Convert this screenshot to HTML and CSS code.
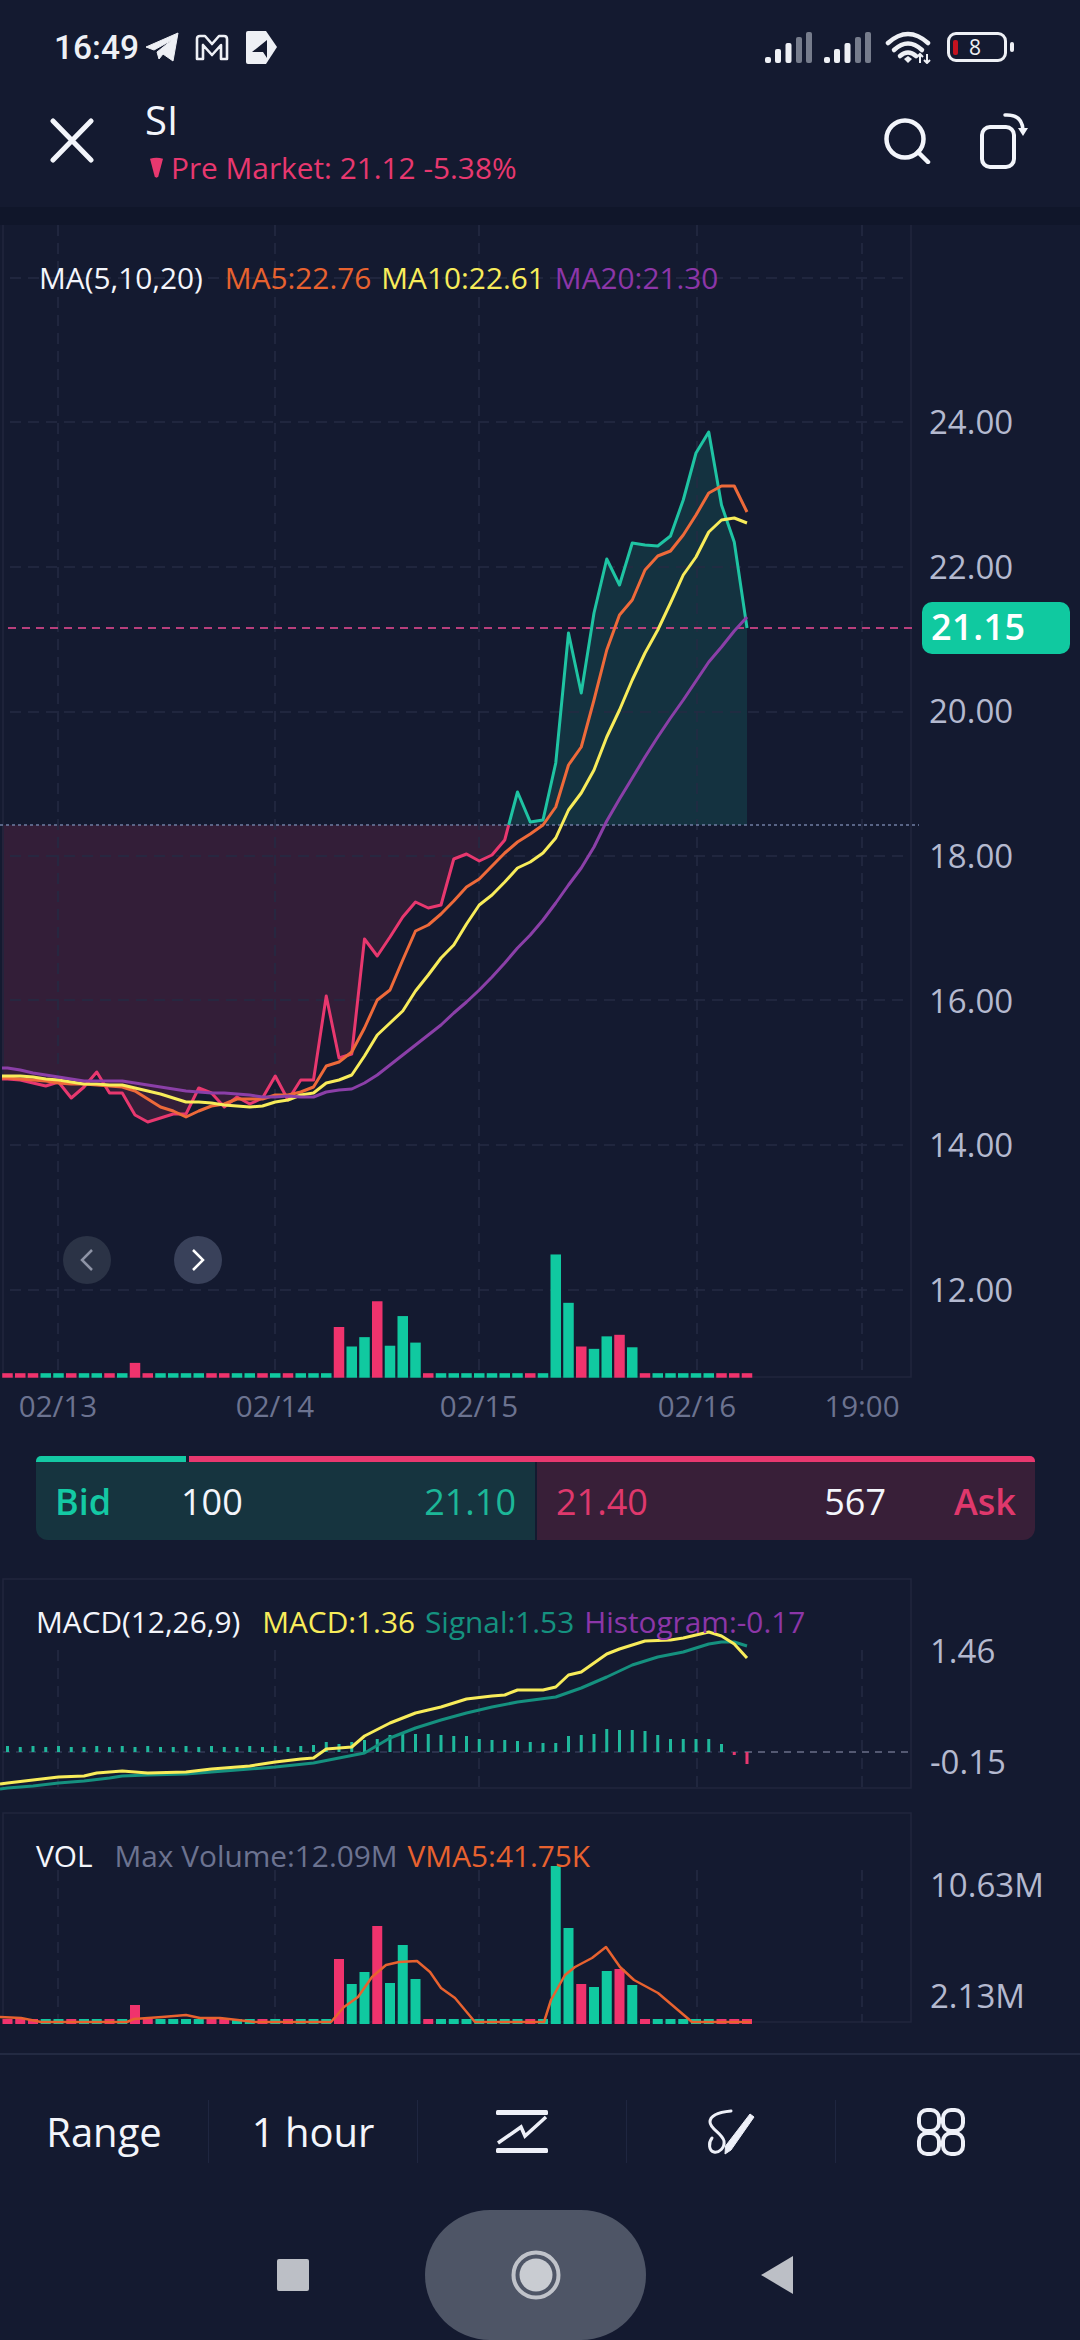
FILE: index.html
```html
<!DOCTYPE html>
<html lang="en">
<head>
    <meta charset="UTF-8">
    <meta name="viewport" content="width=device-width, initial-scale=1.0">
    <title>SI</title>
    <link rel="stylesheet" href="styles.css">
</head>
<body>
    <svg class="defs" width="0" height="0">
        <symbol id="signal" viewBox="0 0 47 31">
            <rect x="0" y="25" width="6" height="6" rx="2" fill="#eef0f5"/>
            <rect x="10" y="17" width="6" height="14" rx="2" fill="#eef0f5"/>
            <rect x="20.5" y="11" width="6" height="20" rx="2" fill="#eef0f5"/>
            <rect x="31" y="5" width="6" height="26" rx="2" fill="#767c8c"/>
            <rect x="41" y="0" width="6" height="31" rx="2" fill="#767c8c"/>
        </symbol>
    </svg>

    <!-- Status bar -->
    <div class="status">
        <span class="time">16:49</span>
        <svg class="st-plane" width="34" height="30" viewBox="0 0 34 30">
            <path d="M1 15 L33 1 L28 29 L18 22 L14 27 L12 20 L27 8 L9 18 Z" fill="#eef0f5" stroke="#eef0f5" stroke-linejoin="round"/>
        </svg>
        <svg class="st-mail" width="34" height="27" viewBox="0 0 34 27">
            <path d="M2 5 Q2 2 5 2 H10 L17 10 L24 2 H29 Q32 2 32 5 V25 H26 V11 L17 21 L8 11 V25 H2 Z" fill="none" stroke="#eef0f5" stroke-width="2.6" stroke-linejoin="round"/>
        </svg>
        <svg class="st-tag" width="32" height="33" viewBox="0 0 32 33">
            <path d="M2 0 H20 L31 16 L20 33 H2 Q0 33 0 31 V2 Q0 0 2 0 Z" fill="#eef0f5"/>
            <path d="M21 9 V27 L17 21 L6 21 Z" fill="#141a30"/>
        </svg>
        <div class="status-right">
            <svg class="st-signal" width="47" height="31"><use href="#signal"/></svg>
            <svg class="st-signal" width="47" height="31"><use href="#signal"/></svg>
            <svg class="st-wifi" width="47" height="34" viewBox="0 0 47 34">
                <g fill="none" stroke="#eef0f5" stroke-width="4.5" stroke-linecap="round">
                    <path d="M3 13 Q23 -5 43 13"/>
                    <path d="M9 20 Q23 7 37 20"/>
                    <path d="M15 26 Q23 19 31 26"/>
                </g>
                <path d="M19 29 L23 26 L27 29 L23 33 Z" fill="#eef0f5"/>
                <path d="M35 24 V33 M42 24 V33 M32 27 L35 24 L38 27 M39 30 L42 33 L45 30" fill="none" stroke="#eef0f5" stroke-width="2"/>
            </svg>
            <div class="battery">
                <span class="battery-level"></span>
                <span class="battery-num">8</span>
            </div>
            <span class="battery-cap"></span>
        </div>
    </div>

    <!-- Header -->
    <div class="topbar">
        <svg class="icon-close" width="44" height="45" viewBox="0 0 44 45">
            <path d="M3 3 L41 42 M41 3 L3 42" stroke="#f3f5fb" stroke-width="5" stroke-linecap="round"/>
        </svg>
        <div class="title">
            <div class="symbol">SI</div>
            <div class="premarket">
                <svg width="13" height="22" viewBox="0 0 14 22"><path d="M0 1 Q7 -1 14 1 L9 20 Q7 23 5 20 Z" fill="#e8386f"/></svg>
                <span>Pre Market: 21.12 -5.38%</span>
            </div>
        </div>
        <div class="topbar-right">
            <svg class="icon-search" width="48" height="46" viewBox="0 0 48 46">
                <circle cx="22" cy="21" r="18.5" fill="none" stroke="#f3f5fb" stroke-width="4.5"/>
                <path d="M35 34 L45 44" stroke="#f3f5fb" stroke-width="4.5" stroke-linecap="round"/>
            </svg>
            <svg class="icon-rotate" width="48" height="57" viewBox="0 0 48 57">
                <rect x="2" y="15" width="32" height="40" rx="8" fill="none" stroke="#f3f5fb" stroke-width="4"/>
                <path d="M25 3 Q42 2 43 18" fill="none" stroke="#f3f5fb" stroke-width="3.5" stroke-linecap="round"/>
                <path d="M38 16 L48 16 L43 24 Z" fill="#f3f5fb"/>
            </svg>
        </div>
    </div>
    <div class="band"></div>

    <!-- Main chart -->
    <div class="chart">
        <svg id="main-chart" class="plot" width="920" height="1205" viewBox="0 225 920 1205">
            <g class="xlabels">
                <text x="58" y="1405">02/13</text>
                <text x="275" y="1405">02/14</text>
                <text x="479" y="1405">02/15</text>
                <text x="697" y="1405">02/16</text>
                <text x="862" y="1405">19:00</text>
            </g>
        </svg>
        <div class="price-axis">
            <span>24.00</span>
            <span>22.00</span>
            <span>20.00</span>
            <span>18.00</span>
            <span>16.00</span>
            <span>14.00</span>
            <span>12.00</span>
        </div>
        <div class="legend legend-main">
            <span class="c-white legend-name">MA(5,10,20)</span>
            <span class="c-orange">MA5:22.76</span>
            <span class="c-yellow">MA10:22.61</span>
            <span class="c-purple">MA20:21.30</span>
        </div>
        <div class="price-tag">21.15</div>
        <button class="nav-btn nav-prev">
            <svg width="48" height="48" viewBox="0 0 48 48"><path d="M29 14 L19 24 L29 34" fill="none" stroke="#8e94a6" stroke-width="2.5"/></svg>
        </button>
        <button class="nav-btn nav-next">
            <svg width="48" height="48" viewBox="0 0 48 48"><path d="M19 14 L29 24 L19 34" fill="none" stroke="#ffffff" stroke-width="2.5"/></svg>
        </button>
    </div>

    <!-- Bid / Ask -->
    <div class="quote">
        <div class="quote-bars">
            <div class="quote-bar-bid"></div>
            <div class="quote-bar-ask"></div>
        </div>
        <div class="quote-row">
            <div class="side bid">
                <strong>Bid</strong>
                <span class="size">100</span>
                <span class="px">21.10</span>
            </div>
            <div class="side ask">
                <span class="px">21.40</span>
                <span class="size">567</span>
                <strong>Ask</strong>
            </div>
        </div>
    </div>

    <!-- MACD -->
    <div class="panel panel-macd">
        <svg id="macd-chart" class="plot" width="920" height="210" viewBox="0 1579 920 210"></svg>
        <div class="side-axis">
            <span>1.46</span>
            <span>-0.15</span>
        </div>
        <div class="legend legend-macd">
            <span class="c-white legend-name">MACD(12,26,9)</span>
            <span class="c-yellow">MACD:1.36</span>
            <span class="c-teal">Signal:1.53</span>
            <span class="c-purple">Histogram:-0.17</span>
        </div>
    </div>

    <!-- Volume -->
    <div class="panel panel-vol">
        <svg id="vol-chart" class="plot" width="920" height="212" viewBox="0 1813 920 212"></svg>
        <div class="side-axis">
            <span>10.63M</span>
            <span>2.13M</span>
        </div>
        <div class="legend legend-vol">
            <span class="c-white legend-name">VOL</span>
            <span class="c-gray">Max Volume:12.09M</span>
            <span class="c-orange">VMA5:41.75K</span>
        </div>
    </div>

    <div class="rule"></div>

    <!-- Toolbar -->
    <div class="toolbar">
        <div class="tool">Range</div>
        <div class="tool">1 hour</div>
        <div class="tool">
            <svg width="52" height="44" viewBox="0 0 52 44">
                <rect x="0" y="0" width="52" height="5" rx="1.5" fill="#eef0f8"/>
                <rect x="0" y="38" width="52" height="5" rx="1.5" fill="#eef0f8"/>
                <path d="M2 33 L25 17 L29 26 L50 7" fill="none" stroke="#eef0f8" stroke-width="3.5"/>
            </svg>
        </div>
        <div class="tool">
            <svg width="48" height="46" viewBox="0 0 48 46">
                <path d="M24 2 C14 3 3 6 3 13 C3 20 15 24 17 32 C18 39 12 44 7 43 C2 42 1 34 5 29" fill="none" stroke="#eef0f8" stroke-width="3" stroke-linecap="round"/>
                <path d="M43 5 L47 8 L24 41 L18 45 L18.500 37 Z" fill="#eef0f8" stroke="#eef0f8" stroke-linejoin="round"/>
            </svg>
        </div>
        <div class="tool">
            <svg width="48" height="48" viewBox="0 0 48 48">
                <g fill="none" stroke="#eef0f8" stroke-width="4">
                    <rect x="2" y="2" width="20" height="21" rx="8"/>
                    <rect x="26" y="2" width="20" height="21" rx="8"/>
                    <rect x="2" y="25" width="20" height="21" rx="8"/>
                    <rect x="26" y="25" width="20" height="21" rx="8"/>
                </g>
            </svg>
        </div>
    </div>

    <!-- Android nav -->
    <div class="navbar">
        <span class="nav-square"></span>
        <div class="nav-pill">
            <svg width="50" height="50" viewBox="0 0 50 50">
                <circle cx="25" cy="25" r="22.5" fill="none" stroke="#c0c3ca" stroke-width="4"/>
                <circle cx="25" cy="25" r="16.5" fill="#c9ccd2"/>
            </svg>
        </div>
        <svg class="nav-back" width="32" height="38" viewBox="0 0 32 38"><path d="M32 0 V38 L0 19 Z" fill="#bcbfc6"/></svg>
    </div>

    <script src="chart.js"></script>
</body>
</html>
```
FILE: styles.css
```css
* {
    box-sizing: border-box;
}
html, body {
    margin: 0;
    padding: 0;
}
body {
    width: 1080px;
    height: 2340px;
    overflow: hidden;
    background-color: #141a30;
    color: #f3f5fb;
    font-family: "Open Sans", "Noto Sans", sans-serif;
}
.defs {
    position: absolute;
}
.plot {
    display: block;
    flex: none;
    overflow: visible;
}

/* status bar */
.status {
    display: flex;
    align-items: center;
    height: 90px;
    padding: 4px 66px 0 54px;
}
.time {
    font-family: Roboto, sans-serif;
    font-size: 33.5px;
    font-weight: 500;
    color: #eef0f5;
    width: 91px;
}
.st-mail {
    margin-left: 16px;
}
.st-tag {
    margin-left: 17px;
}
.status-right {
    display: flex;
    align-items: center;
    margin-left: auto;
}
.st-signal {
    margin-right: 12px;
}
.st-wifi {
    margin-left: 2px;
    margin-right: 15px;
}
.battery {
    display: flex;
    align-items: center;
    width: 60px;
    height: 30px;
    padding-left: 3px;
    border: 3px solid #eef0f5;
    border-radius: 9px;
}
.battery-level {
    width: 5px;
    height: 15px;
    border-radius: 2px;
    background-color: #c4121f;
}
.battery-num {
    margin-left: 11px;
    font-size: 21px;
    line-height: 1;
    color: #eef0f5;
}
.battery-cap {
    width: 4px;
    height: 10px;
    margin-left: 3px;
    border-radius: 2px;
    background-color: #eef0f5;
}

/* header */
.topbar {
    display: flex;
    align-items: flex-start;
    height: 117px;
    padding: 0 52px 0 50px;
}
.icon-close {
    margin-top: 28px;
}
.title {
    margin-left: 51px;
    padding-top: 5px;
}
.symbol {
    font-size: 40px;
    font-weight: 500;
    line-height: 50px;
}
.premarket {
    display: flex;
    align-items: center;
    gap: 8px;
    margin-top: 3px;
    margin-left: 5px;
    font-size: 29.8px;
    line-height: 40px;
    color: #e8386f;
}
.topbar-right {
    display: flex;
    align-items: flex-start;
    margin-left: auto;
    padding-top: 22px;
}
.icon-search {
    margin-top: 6px;
    margin-right: 49px;
}
.band {
    height: 18px;
    background-color: #10162a;
}

/* main chart */
.chart {
    position: relative;
    display: flex;
    height: 1205px;
}
.xlabels text {
    font-size: 29.5px;
    fill: #6c7390;
    text-anchor: middle;
    dominant-baseline: central;
}
.price-axis {
    display: flex;
    flex-direction: column;
    padding: 124px 0 0 9px;
    font-size: 33px;
    color: #b4b9cf;
}
.price-axis span {
    display: flex;
    align-items: center;
    height: 144.7px;
}
.price-tag {
    position: absolute;
    left: 922px;
    top: 377px;
    width: 148px;
    height: 52px;
    padding-left: 9px;
    border-radius: 10px;
    background-color: #10c9a0;
    color: #ffffff;
    font-size: 36px;
    font-weight: 600;
    letter-spacing: 0.5px;
    line-height: 50px;
}
.nav-btn {
    position: absolute;
    top: 1011px;
    width: 48px;
    height: 48px;
    padding: 0;
    border: none;
    border-radius: 50%;
}
.nav-btn svg {
    display: block;
}
.nav-prev {
    left: 63px;
    background-color: #2b3346;
}
.nav-next {
    left: 174px;
    background-color: #39415a;
}

/* legends on top of the charts */
.legend {
    position: absolute;
    display: flex;
    font-size: 29.8px;
    line-height: 40px;
    white-space: nowrap;
}
.legend span {
    margin-right: 10px;
}
.legend .legend-name {
    margin-right: 22px;
}
.legend-main {
    left: 39px;
    top: 33px;
}
.legend-macd {
    left: 36px;
    top: 23px;
}
.legend-vol {
    left: 36px;
    top: 23px;
}
.c-white {
    color: #f3f5fb;
}
.c-orange {
    color: #e8622f;
}
.c-yellow {
    color: #f8ec5a;
}
.c-purple {
    color: #8c36a8;
}
.c-teal {
    color: #15917f;
}
.c-gray {
    color: #6c7390;
}

/* bid / ask */
.quote {
    width: 999px;
    height: 84px;
    margin: 26px 0 0 36px;
}
.quote-bars {
    display: flex;
    gap: 3px;
    height: 6px;
}
.quote-bar-bid {
    width: 150px;
    border-radius: 5px 0 0 0;
    background-color: #14c9a4;
}
.quote-bar-ask {
    flex: 1;
    border-radius: 0 5px 0 0;
    background-color: #e8386f;
}
.quote-row {
    display: flex;
    gap: 2px;
    height: 78px;
}
.side {
    display: flex;
    align-items: center;
    padding: 0 19px;
    font-size: 36px;
}
.side strong {
    font-weight: 600;
}
.bid {
    width: 499px;
    border-radius: 0 0 0 12px;
    background-color: #16343f;
    color: #1cb798;
}
.bid strong {
    width: 126px;
    color: #14c9a4;
}
.bid .px {
    margin-left: auto;
}
.ask {
    flex: 1;
    border-radius: 0 0 12px 0;
    background-color: #381f38;
    color: #df386c;
}
.ask .size {
    margin-left: auto;
    margin-right: 68px;
}
.size {
    color: #f3f5fb;
}

/* lower panels */
.panel {
    position: relative;
    display: flex;
}
.panel-macd {
    height: 210px;
    margin-top: 39px;
}
.panel-vol {
    height: 212px;
    margin-top: 24px;
}
.side-axis {
    display: flex;
    flex-direction: column;
    gap: 67px;
    padding: 50px 0 0 10px;
    font-size: 33px;
    line-height: 44px;
    color: #b4b9cf;
}
.rule {
    height: 2px;
    margin-top: 28px;
    background-color: #232a42;
}

/* toolbar */
.toolbar {
    display: grid;
    grid-template-columns: repeat(5, 209px);
    height: 63px;
    margin-top: 45px;
}
.tool {
    display: flex;
    align-items: center;
    justify-content: center;
    border-right: 1px solid #1f2640;
    font-size: 40px;
    font-weight: 500;
    color: #f3f5fb;
}
.tool:last-child {
    border-right: none;
}

/* android nav */
.navbar {
    display: flex;
    align-items: center;
    height: 130px;
    margin-top: 47px;
    padding-left: 277px;
}
.nav-square {
    width: 32px;
    height: 32px;
    border-radius: 2px;
    background-color: #bcbfc6;
}
.nav-pill {
    display: flex;
    align-items: center;
    justify-content: center;
    width: 221px;
    height: 130px;
    margin: 0 115px 0 116px;
    border-radius: 66px;
    background-color: #4e5566;
}
```
FILE: chart.js
```js
// Datos en coordenadas de pantalla: una vela cada 12.75px
const X = i => 7.5 + 12.75 * i;
const SVG_NS = 'http://www.w3.org/2000/svg';

const PINK = '#e8386f';
const TEAL = '#1fc4a3';
const BAR_TEAL = '#10c9a0';
const BAR_PINK = '#f0336d';
const GRID = '#252b43';

const price = [1079,1080,1083,1086,1082,1098,1087,1072,1093,1093,
    1115,1122,1118,1114,1114,1088,1093,1107,1097,1104,
    1098,1076,1100,1080,1080,996,1058,1054,939,956,
    937,917,902,908,905,859,854,861,855,840,
    792,822,820,763,633,693,613,559,585,543,
    545,546,536,500,453,432,505,542,628];
const ma5 = [1078,1079,1080,1081,1083,1084,1084,1085,1086,1087,
    1091,1099,1107,1111,1117,1111,1106,1104,1099,1099,
    1099,1095,1095,1092,1087,1066,1062,1052,1028,1000,
    990,960,931,925,914,901,887,879,866,853,
    842,834,825,807,765,747,700,650,615,600,
    570,556,551,535,515,493,486,486,512];
const ma10 = [1076,1076,1077,1079,1080,1082,1084,1084,1085,1085,
    1088,1091,1094,1098,1102,1102,1103,1105,1106,1107,
    1106,1102,1100,1095,1093,1083,1080,1075,1056,1035,
    1023,1011,991,975,958,945,924,905,895,882,
    868,862,853,838,810,793,770,737,710,680,
    653,630,603,575,557,532,520,518,523];
const ma20 = [1068,1070,1073,1075,1077,1079,1081,1081,1081,1081,
    1083,1085,1087,1089,1091,1092,1093,1093,1094,1095,
    1097,1097,1096,1097,1097,1092,1090,1089,1083,1075,
    1065,1055,1045,1035,1025,1013,1002,990,977,963,
    948,935,920,903,885,868,847,821,799,778,
    757,737,718,700,681,662,647,631,617];

const macdLine = [[0,1783],[2,1780],[4,1777],[6,1776],[7,1773],[9,1771],[11,1773],[14,1772],[16,1769],[18,1767],[19,1766],[21,1762],[23,1759],[24,1758],[25,1749],[27,1747],[28,1736],[30,1723],[32,1713],[34,1707],[36,1699],[38,1696],[39,1695],[40,1690],[42,1690],[43,1687],[44,1675],[45,1672],[47,1654],[48,1649],[50,1641],[52,1640],[53,1638],[55,1632],[56,1636],[57,1644],[58,1658]];
const signalLine = [[0,1788],[2,1786],[4,1783],[6,1781],[8,1778],[9,1776],[11,1775],[14,1774],[16,1772],[18,1770],[21,1767],[24,1763],[26,1758],[28,1753],[30,1738],[32,1728],[34,1720],[36,1713],[38,1707],[40,1702],[43,1697],[45,1688],[47,1677],[49,1665],[51,1657],[53,1652],[55,1644],[56,1642],[57,1642],[58,1646]];
const histogram = [6,5,6,5,6,5,5,6,5,6,5,6,5,5,6,5,6,5,5,6,5,6,5,6,7,10,8,10,12,13,17,18,18,18,17,16,16,13,12,12,11,10,9,9,16,17,18,23,22,22,21,17,13,13,13,13,8,-3,-12];

// t = verde, p = rojo
const volColors = 'ppptt' + 'pttpt' + 'pptttt' + 'pptt' + 'ptpttt' + 'pttp' + 'tttp' + 'tttttt' + 'tpttt' + 'pttpt' + 'ptttttppp';
const volHigh = {10: 19, 26: 65, 27: 40, 28: 52, 29: 98, 30: 41, 31: 79, 32: 45, 43: 158, 44: 96, 45: 40, 46: 37, 47: 53, 48: 55, 49: 39};
const vma5 = '0,2017 21,2018 41,2022 127,2022 134,2019 162,2017 186,2015 200,2018 220,2018 255,2022 331,2022 344,2007 358,1997 372,1977 386,1965 399,1962 417,1961 430,1972 441,1988 455,1998 475,2022 544,2022 551,2000 565,1975 575,1967 592,1958 606,1947 620,1967 634,1980 658,1993 692,2022 751,2022';

function add(svg, tag, attrs) {
    const node = document.createElementNS(SVG_NS, tag);
    for (const key in attrs) {
        node.setAttribute(key, attrs[key]);
    }
    svg.appendChild(node);
    return node;
}

function dashed(svg, x1, y1, x2, y2, color, dash, width) {
    add(svg, 'line', {x1, y1, x2, y2, stroke: color, 'stroke-width': width || 1.5, 'stroke-dasharray': dash});
}

function line(svg, points, color, width) {
    add(svg, 'polyline', {
        points, fill: 'none', stroke: color, 'stroke-width': width, 'stroke-linejoin': 'round'
    });
}

const toPoints = ys => '2,' + ys[0] + ' ' + ys.map((y, i) => X(i) + ',' + y).join(' ');
const pairPoints = pairs => '0,' + (pairs[0][1] + 1) + ' ' + pairs.map(p => X(p[0]) + ',' + p[1]).join(' ');

function volBars(svg, base, scale, width, minHeight) {
    for (let i = 0; i < 59; i++) {
        const h = Math.max((volHigh[i] || 0) * scale, minHeight);
        add(svg, 'rect', {
            x: X(i) - width / 2, y: base - h, width, height: h,
            fill: volColors[i] === 'p' ? BAR_PINK : BAR_TEAL
        });
    }
}

function frame(svg, top, bottom) {
    add(svg, 'rect', {x: 3, y: top, width: 908, height: bottom - top, fill: 'none', stroke: '#20263d', 'stroke-width': 1.5});
}

function vGrid(svg, top, bottom) {
    [58, 275, 479, 697, 862].forEach(x => dashed(svg, x, top, x, bottom, GRID, '11 7'));
}

function drawMain() {
    const svg = document.getElementById('main-chart');
    const base = 825;
    const cross = 508.7;

    // relleno bajo / sobre la línea base
    const below = price.slice(0, 40).map((y, i) => X(i) + ',' + y).join(' ');
    add(svg, 'polygon', {points: '2,' + base + ' 2,' + price[0] + ' ' + below + ' ' + cross + ',' + base, fill: '#331e38'});
    const above = price.slice(40).map((y, i) => X(i + 40) + ',' + y).join(' ');
    add(svg, 'polygon', {points: cross + ',' + base + ' ' + above + ' ' + X(58) + ',' + base, fill: '#143240'});

    // solo bordes laterales y base en el panel principal
    add(svg, 'path', {d: 'M3 225 V1377 H911 V225', fill: 'none', stroke: '#20263d', 'stroke-width': 1.5});
    [278, 422, 567, 712, 856, 1000, 1145, 1290].forEach(y => dashed(svg, 10, y, 908, y, GRID, '11 7'));
    vGrid(svg, 225, 1377);
    volBars(svg, 1377.7, 0.78, 10.5, 4.5);

    line(svg, '2,' + price[0] + ' ' + below + ' ' + cross + ',' + base, PINK, 3);
    line(svg, cross + ',' + base + ' ' + above, TEAL, 3);

    dashed(svg, 8, 628, 913, 628, '#b83f7c', '8 6', 2);
    dashed(svg, 0, base, 919, base, '#6f7da3', '3 3');

    line(svg, toPoints(ma5), '#ee6a3a', 3);
    line(svg, toPoints(ma10), '#f8ec5a', 3);
    line(svg, toPoints(ma20), '#8b3fa8', 3);
}

function drawMacd() {
    const svg = document.getElementById('macd-chart');
    frame(svg, 1579, 1788);
    vGrid(svg, 1650, 1788);
    dashed(svg, 3, 1752, 745, 1752, '#333a55', '7 6');
    dashed(svg, 745, 1752, 912, 1752, '#6a6f88', '7 6');
    histogram.forEach((h, i) => {
        add(svg, 'rect', {
            x: X(i) - 1.5,
            y: h > 0 ? 1752 - h : 1752,
            width: 3,
            height: Math.abs(h),
            fill: h > 0 ? '#1fb89c' : PINK
        });
    });
    line(svg, pairPoints(signalLine), '#15917f', 3);
    line(svg, pairPoints(macdLine), '#f8ec5a', 3);
}

function drawVol() {
    const svg = document.getElementById('vol-chart');
    frame(svg, 1813, 2022);
    vGrid(svg, 1870, 2022);
    volBars(svg, 2024, 1, 10, 5);
    line(svg, vma5, '#e8622f', 2.5);
}

drawMain();
drawMacd();
drawVol();
```
